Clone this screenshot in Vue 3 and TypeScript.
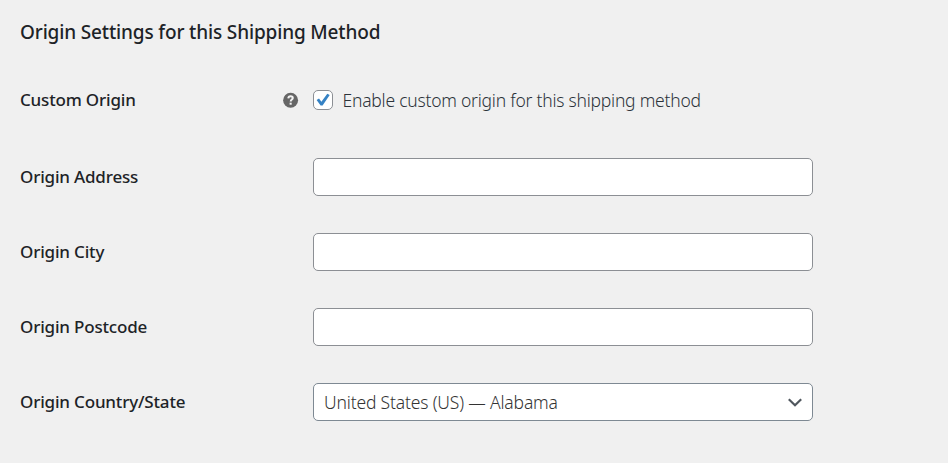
<script setup lang="ts">
import { ref } from 'vue'

interface Field {
  id: string
  label: string
}

const fields: Field[] = [
  { id: 'address', label: 'Origin Address' },
  { id: 'city', label: 'Origin City' },
  { id: 'postcode', label: 'Origin Postcode' },
]

const enabled = ref(true)
const values = ref<Record<string, string>>({ address: '', city: '', postcode: '' })
</script>

<template>
  <main class="settings">
    <h2 class="title">Origin Settings for this Shipping Method</h2>

    <div class="row toggle-row">
      <span class="label custom">Custom Origin</span>
      <svg class="help" viewBox="0 0 16 16" aria-hidden="true">
        <circle cx="7.6" cy="8.2" r="7.5" fill="#666" />
        <path d="M5.3 6.4C5.4 4.9 6.3 4.3 7.6 4.3c1.4 0 2.2.7 2.2 1.8 0 1.5-2.1 1.5-2.1 3.4" fill="none" stroke="#f4f4f4" stroke-width="2" />
        <rect x="6.6" y="10.7" width="2.1" height="2" fill="#f4f4f4" />
      </svg>
      <label class="check">
        <input v-model="enabled" class="native" type="checkbox" />
        <span class="box">
          <svg v-if="enabled" viewBox="0 0 18 18" aria-hidden="true">
            <path d="M2.6 9 5 7.6 7.4 10.7 13.3 2.8 15.7 4 8.6 14.4H6.6Z" fill="#3582c4" />
          </svg>
        </span>
        <span class="text">Enable custom origin for this shipping method</span>
      </label>
    </div>

    <div v-for="field in fields" :key="field.id" class="row">
      <label class="label" :class="field.id" :for="field.id">{{ field.label }}</label>
      <input :id="field.id" v-model="values[field.id]" class="control" type="text" />
    </div>

    <div class="row">
      <span class="label country">Origin Country/State</span>
      <div class="control select" role="combobox" tabindex="0">
        <span class="value">United States (US) — Alabama</span>
        <svg class="chevron" viewBox="0 0 16 16" aria-hidden="true">
          <path d="M1.8 5.2 8 11.2 14.2 5.2" fill="none" stroke="#50575e" stroke-width="2.2" />
        </svg>
      </div>
    </div>
  </main>
</template>

<style>
body {
  background: #f0f0f0;
}
</style>

<style scoped>
.settings {
  box-sizing: border-box;
  width: 948px;
  height: 463px;
  padding: 18px 20px 0;
  background: #f0f0f0;
  color: #1d2327;
  font-family: "Noto Sans", "Open Sans", sans-serif;
  font-size: 17px;
}
.title {
  margin: 0;
  height: 28px;
  line-height: 28px;
  font-size: 19px;
  font-weight: 500;
  letter-spacing: -0.15px;
  white-space: nowrap;
}
.row {
  display: flex;
  align-items: center;
  height: 75px;
}
.toggle-row {
  height: 40px;
  margin: 34px 0 19px;
}
.label {
  width: 293px;
  flex: none;
  line-height: 24px;
  font-weight: 500;
  letter-spacing: -0.18px;
  white-space: nowrap;
}
.custom {
  width: 263px;
}
.help {
  width: 16px;
  height: 16px;
  margin-right: 14px;
}
.check {
  display: flex;
  align-items: center;
}
.native {
  position: absolute;
  opacity: 0;
  margin: 0;
}
.box {
  box-sizing: border-box;
  width: 20px;
  height: 20px;
  margin-right: 9.5px;
  border: 1px solid #8c8f94;
  border-radius: 5px;
  background: #fff;
}
.box svg {
  display: block;
  width: 18px;
  height: 18px;
}
.text,
.value {
  color: #2c333a;
  font-size: 17.5px;
  font-weight: 300;
  letter-spacing: -0.23px;
  line-height: 24px;
  white-space: nowrap;
}
.control {
  box-sizing: border-box;
  width: 500px;
  height: 38px;
  border: 1px solid #8c8f94;
  border-radius: 5px;
  background: #fff;
  padding: 0 9px;
  font: inherit;
  outline: none;
}
.select {
  display: flex;
  align-items: center;
  justify-content: space-between;
  padding-left: 10px;
  border-color: #7e8993;
}
.value {
  color: #333;
  letter-spacing: -0.17px;
}
.chevron {
  width: 16px;
  height: 16px;
}
</style>
